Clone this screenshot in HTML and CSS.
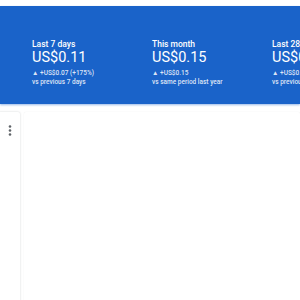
FILE: index.html
```html
<!DOCTYPE html>
<html lang="en">
<head>
    <meta charset="UTF-8">
    <meta name="viewport" content="width=device-width, initial-scale=1.0">
    <title>Earnings</title>
    <link rel="stylesheet" href="styles.css">
</head>
<body>
    <section class="summary">
        <div class="stat">
            <p class="stat-label">Last 7 days</p>
            <p class="stat-value">US$0.11</p>
            <p class="stat-delta">&#9650; +US$0.07 (+175%)</p>
            <p class="stat-compare">vs previous 7 days</p>
        </div>
        <div class="stat">
            <p class="stat-label">This month</p>
            <p class="stat-value">US$0.15</p>
            <p class="stat-delta">&#9650; +US$0.15</p>
            <p class="stat-compare">vs same period last year</p>
        </div>
        <div class="stat">
            <p class="stat-label">Last 28 days</p>
            <p class="stat-value">US$0.19</p>
            <p class="stat-delta">&#9650; +US$0.19</p>
            <p class="stat-compare">vs previous 28 days</p>
        </div>
    </section>

    <main class="cards">
        <div class="card card-side">
            <svg class="kebab" width="4" height="11" viewBox="0 0 4 11">
                <circle cx="2" cy="1.5" r="1.3" fill="#5f6368"/>
                <circle cx="2" cy="5.5" r="1.3" fill="#5f6368"/>
                <circle cx="2" cy="9.5" r="1.3" fill="#5f6368"/>
            </svg>
        </div>
        <div class="card card-main"></div>
    </main>
</body>
</html>
```

FILE: styles.css
```css
* {
    margin: 0;
    padding: 0;
    box-sizing: border-box;
}

body {
    font-family: Roboto, 'Liberation Sans', sans-serif;
    background-color: #fff;
    width: 300px;
    height: 300px;
    overflow: hidden;
    padding-top: 6px;
}

.summary {
    display: flex;
    background-color: #1a63c9;
    color: #fff;
    height: 98px;
    padding: 33px 0 0 32px;
    overflow: hidden;
    box-shadow: 0 1px 2px rgba(26, 99, 201, 0.45);
}

.stat {
    flex: 0 0 120px;
    white-space: nowrap;
}

.stat-label {
    font-size: 8.5px;
    line-height: 10px;
    font-weight: 500;
}

.stat-value {
    font-size: 14.5px;
    line-height: 16px;
    margin-top: 1px;
}

.stat-delta {
    font-size: 6.5px;
    line-height: 9px;
    margin-top: 3px;
    font-weight: 500;
    color: rgba(255, 255, 255, 0.85);
}

.stat-compare {
    font-size: 6.5px;
    line-height: 9px;
    font-weight: 500;
    color: rgba(255, 255, 255, 0.85);
}

.cards {
    display: flex;
    gap: 4px;
    margin-top: 8px;
    height: 200px;
}

.card {
    background-color: #fff;
    box-shadow: 0 0 2px rgba(60, 64, 67, 0.25);
    border-radius: 2px;
}

.card-side {
    width: 22px;
    margin-left: -2px;
    padding: 13px 0 0 10px;
}

.kebab {
    display: block;
}

.card-main {
    flex: 1;
    box-shadow: 0 0 1px rgba(60, 64, 67, 0.12);
}
```
